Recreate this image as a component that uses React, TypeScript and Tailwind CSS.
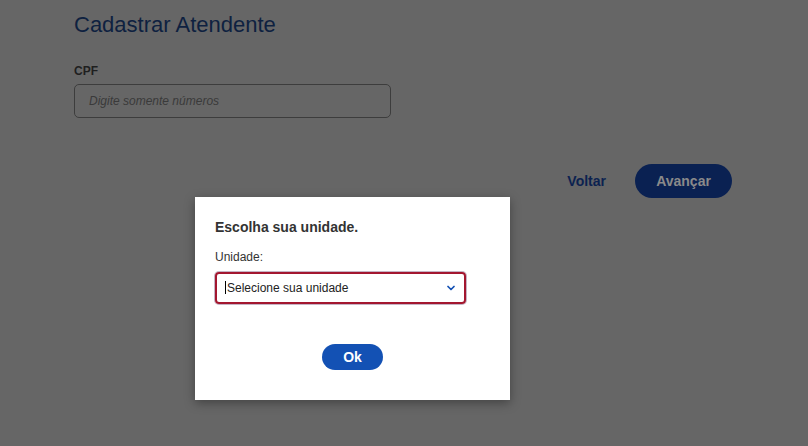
import { ChevronDown } from 'lucide-react';

export default function App() {
  return (
    <div className="relative w-[808px] h-[446px] overflow-hidden bg-[#666666] font-['Liberation_Sans',Arial,sans-serif]">
      {/* Background page (dimmed) */}
      <div className="flex flex-col pl-[74px] pr-[76px] pt-[11px]">
        <h1 className="text-[22px] leading-[28px] text-[#0e2140]">Cadastrar Atendente</h1>

        <label className="mt-[25px] text-[12px] font-bold leading-[14px] text-[#1f1f1f]">CPF</label>
        <div className="mt-[6px] flex h-[34px] w-[317px] items-center rounded-[5px] border border-[#3d3d3d] px-[14px]">
          <span className="text-[12px] italic text-[#3a3a3a]">Digite somente números</span>
        </div>

        <div className="mt-[46px] flex items-center justify-end gap-[29px]">
          <button className="text-[14px] font-bold text-[#0c2250]">Voltar</button>
          <button className="h-[34px] w-[97px] rounded-full bg-[#0a2152] text-[14px] font-bold text-[#8a8a8a]">
            Avançar
          </button>
        </div>
      </div>

      {/* Modal */}
      <div className="absolute left-[195px] top-[197px] flex h-[203px] w-[315px] flex-col bg-white px-[20px] pt-[21px] shadow-[0_3px_10px_rgba(0,0,0,0.35)]">
        <h2 className="text-[14px] font-bold leading-[18px] text-[#333333]">Escolha sua unidade.</h2>
        <label className="mt-[14px] text-[12px] leading-[14px] text-[#333333]">Unidade:</label>
        <div className="mt-[8px] flex h-[32px] w-[251px] items-center justify-between rounded-[4px] border-2 border-[#a3172f] pl-[8px] pr-[7px] shadow-[0_0_0_1px_rgba(90,40,90,0.35)]">
          <span className="text-[12px] text-[#222222]">
            <span className="mr-[1px] inline-block h-[13px] w-px bg-black align-[-2px]" />
            Selecione sua unidade
          </span>
          <ChevronDown className="h-[12px] w-[12px] text-[#1351b4]" strokeWidth={3.5} />
        </div>
        <div className="mt-[40px] flex justify-center">
          <button className="h-[26px] w-[61px] rounded-full bg-[#1351b4] text-[14px] font-bold text-white">Ok</button>
        </div>
      </div>
    </div>
  );
}
